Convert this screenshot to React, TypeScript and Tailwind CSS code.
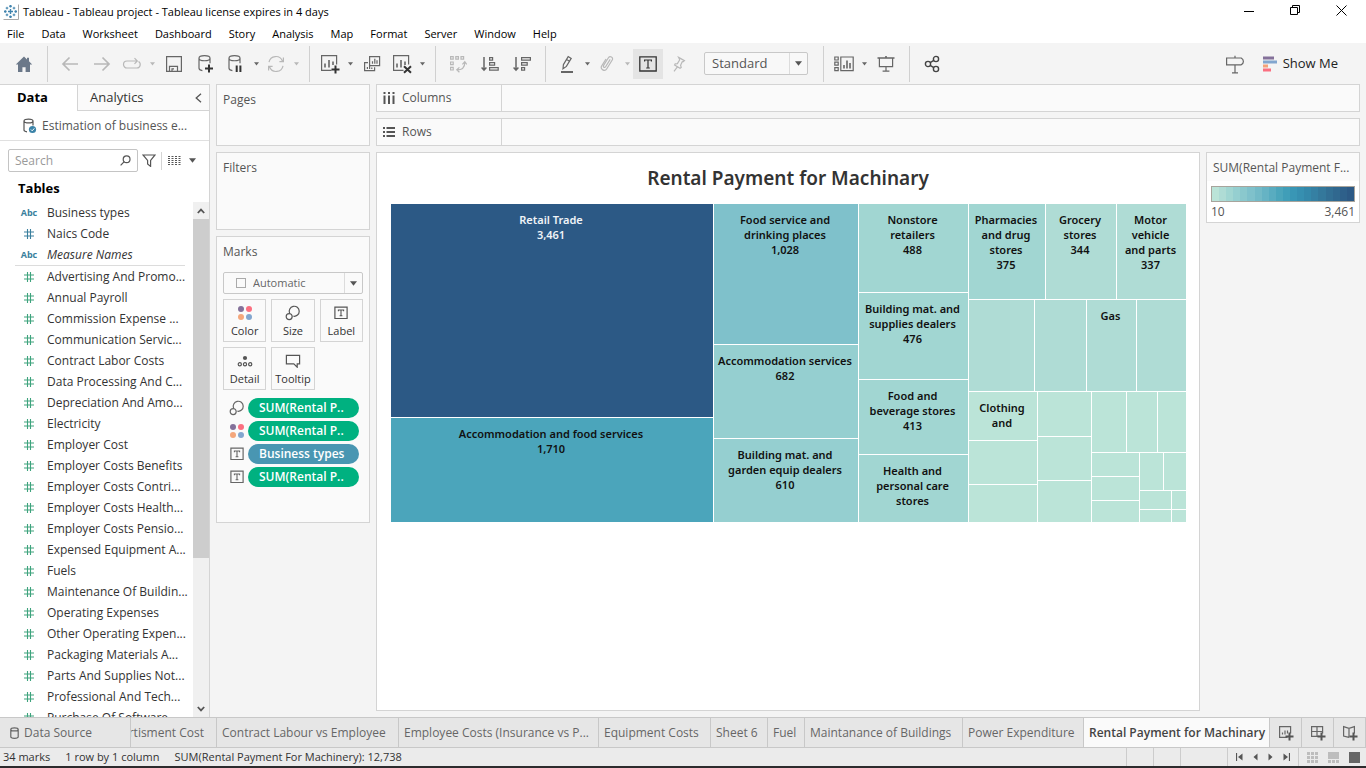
import React from "react";
import type { ReactNode } from "react";

/* ---------- icons ---------- */

type IconProps = { w?: number; h?: number; children: ReactNode; className?: string };

function Icon({ w = 20, h = 20, children, className = "" }: IconProps) {
  return (
    <svg
      width={w}
      height={h}
      viewBox={`0 0 ${w} ${h}`}
      fill="none"
      stroke="currentColor"
      strokeWidth={1.2}
      className={`shrink-0 ${className}`}
      aria-hidden="true"
    >
      {children}
    </svg>
  );
}

const TableauLogo = () => (
  <Icon w={16} h={16}>
    <path d="M0.5 15.5h15v-15" stroke="#a8a8a8" strokeWidth={1} />
    <g stroke="#3f83ad" strokeWidth={1.4}>
      <path d="M7.5 5v5M5 7.5h5M7.5 1v2.6M6.2 2.3h2.6M7.5 11.4V14M6.2 12.7h2.6M1 7.5h2.6M2.3 6.2v2.6M11.4 7.5H14M12.7 6.2v2.6" />
      <path d="M4 2.8v2.6M2.7 4.1h2.6M11 2.8v2.6M9.7 4.1h2.6M4 9.6v2.6M2.7 10.9h2.6M11 9.6v2.6M9.7 10.9h2.6" strokeWidth={1} />
    </g>
  </Icon>
);

const HomeIcon = () => (
  <Icon w={18} h={16}>
    <path d="M9 0.5 0.8 8.4H3V16h4.4v-4.8h3.2V16H15V8.4h2.2L14 5.3V1.8h-2v1.6z" fill="#6b7889" stroke="none" />
  </Icon>
);

const ArrowLeft = () => (
  <Icon w={18} h={16}>
    <path d="M17 8H2M8.5 1.5 2 8l6.5 6.5" strokeWidth={1.7} />
  </Icon>
);

const ArrowRight = () => (
  <Icon w={18} h={16}>
    <path d="M1 8h15M9.5 1.5 16 8l-6.5 6.5" strokeWidth={1.7} />
  </Icon>
);

const ReplayIcon = () => (
  <Icon w={20} h={14}>
    <path d="M12 4H5a3.5 3.5 0 0 0 0 7h10a3.5 3.5 0 0 0 1.5-6.5M10 4h5M12.5 1.2 15.3 4l-2.8 2.8" />
  </Icon>
);

const SaveIcon = () => (
  <Icon w={16} h={16}>
    <path d="M0.6 0.6h14.8v14.8H0.6zM3.5 15.4v-5h8v5M6 15.4v-2.6h2" />
  </Icon>
);

function DatabaseIcon({ badge }: { badge: "plus" | "pause" }) {
  return (
    <Icon w={18} h={20}>
      <path d="M2 4.2c0-3.4 11-3.4 11 0s-11 3.4-11 0zM2 4.2v10c0 1.4 1.2 2 3.4 2.4M13 4.2v5" />
      {badge === "plus" ? (
        <path d="M12 10.5v8M8 14.5h8" stroke="#333" strokeWidth={2} />
      ) : (
        <path d="M9.7 11.5v6.5M13.4 11.5v6.5" stroke="#333" strokeWidth={2} />
      )}
    </Icon>
  );
}

const RefreshIcon = () => (
  <Icon w={18} h={18}>
    <path d="M2 7.2A7 7 0 0 1 15.4 6M16 10.8A7 7 0 0 1 2.6 12M16.4 2.6v4h-4M1.6 15.4v-4h4" />
  </Icon>
);

const NewSheetIcon = ({ badge = "plus" }: { badge?: "plus" | "cross" }) => (
  <Icon w={20} h={20}>
    <path d="M11.5 16.4H1.6V1.6h15v9" />
    <path d="M5 13.5v-4M9 13.5V6M13 11V7.5" strokeWidth={1.6} />
    {badge === "plus" ? (
      <path d="M15.5 11.5v8M11.5 15.5h8" stroke="#333" strokeWidth={2} />
    ) : (
      <path d="m12 12.2 7 6.6M19 12.2l-7 6.6" stroke="#333" strokeWidth={2} />
    )}
  </Icon>
);

const DuplicateIcon = () => (
  <Icon w={18} h={18}>
    <path d="M6.6 1.6h10v9h-10zM5 7.6H1.6v8h10v-3.4" />
    <path d="M9.5 8.8V6.2M11.8 8.8V3.8M14 8.8V5.2M4.4 14v-2M6.6 14v-3.4M8.8 14v-1.6" />
  </Icon>
);

const SwapIcon = () => (
  <Icon w={18} h={18}>
    <path d="M1.6 1.6h2.6v2.6H1.6zM6.8 1.6h2.6v2.6H6.8zM12 1.6h2.6v2.6H12zM1.6 7h2.6v2.6H1.6zM1.6 12.4h2.6V15H1.6z" />
    <path d="M15.8 7.4c0 4.4-2.6 7.4-7.8 7.4M13.4 9.4l2.4-2.6 2 2.6M10.4 12.4 7.8 14.8l2.6 2.4" />
  </Icon>
);

const SortAscIcon = () => (
  <Icon w={18} h={16}>
    <path d="M3 1v13M0.6 11.6 3 14.2l2.4-2.6" strokeWidth={1.5} />
    <path d="M8.6 1.6h3v2.6h-3zM8.6 6.6h5v2.6h-5zM8.6 11.6h8.6v2.6H8.6z" />
  </Icon>
);

const SortDescIcon = () => (
  <Icon w={18} h={16}>
    <path d="M3 1v13M0.6 11.6 3 14.2l2.4-2.6" strokeWidth={1.5} />
    <path d="M8.6 1.6h8.8v2.6H8.6zM8.6 6.6h5.6v2.6H8.6zM8.6 11.6h3v2.6h-3z" />
  </Icon>
);

const PenIcon = () => (
  <Icon w={14} h={18}>
    <path d="m3.4 9.6 4.8-8 3 1.8-4.8 8-3.4 2.4zM6.6 4.4l3 1.8" />
    <path d="M1 17h12" strokeWidth={2} />
  </Icon>
);

const ClipIcon = () => (
  <Icon w={14} h={18}>
    <path d="m10.2 4.4-4.6 7.4c-.8 1.4-3 .2-2-1.4l4.8-7.6c1.6-2.4 5.2-.4 3.8 2.2l-5.4 8.8c-2 3.2-7 .6-5.2-2.8L6 4" />
  </Icon>
);

const LabelIcon = ({ small = false }: { small?: boolean }) =>
  small ? (
    <Icon w={14} h={14}>
      <path d="M0.9 1.1h12.2v11.4H0.9z" />
      <path d="M4.4 5.2V4h5.2v1.2M7 4v5.8M5.6 9.8h2.8" strokeWidth={1.1} />
    </Icon>
  ) : (
    <Icon w={18} h={16}>
      <path d="M0.8 0.8h16.4v14.2H0.8z" strokeWidth={1.3} />
      <path d="M5.6 5.6V4h6.8v1.6M9 4v8M7.2 12h3.6" />
    </Icon>
  );

const PinIcon = () => (
  <Icon w={14} h={16}>
    <path d="m6.6 1.4 5.8 3.2-1.2 1-1 .2-1.6 3.4.6 2.2-1.2.8-5.4-3.2.6-1.2 2.2-.2L7.6 4l-.2-1zM5.6 10.6 2 15.4" />
  </Icon>
);

const FitIcon = () => (
  <Icon w={20} h={16}>
    <path d="M0.8 1h3.4v3H0.8zM0.8 6.2h3.4v3H0.8zM0.8 11.6h3.4v3H0.8zM6.8 1h12.4v13.6H6.8z" />
    <path d="M10 12.4V9M13 12.4V4.4M16 12.4V7" strokeWidth={1.6} />
  </Icon>
);

const PresentIcon = () => (
  <Icon w={18} h={18}>
    <path d="M0.5 3h17M9 1v2" strokeWidth={1.6} />
    <path d="M2.4 3v8.6h13.2V3M9 11.6V16M5.6 16.2h6.8" />
  </Icon>
);

const ShareIcon = () => (
  <Icon w={16} h={18}>
    <g stroke="#444" strokeWidth={1.4}>
      <circle cx="4" cy="9" r="2.6" />
      <circle cx="12" cy="4" r="2.6" />
      <circle cx="12" cy="14" r="2.6" />
      <path d="m6.2 7.6 3.6-2.2M6.2 10.4l3.6 2.2" />
    </g>
  </Icon>
);

const SignpostIcon = () => (
  <Icon w={20} h={20}>
    <path d="M1.6 4h14.6c1.4.8 2.2 2 2.2 3.4 0 1.4-.8 2.6-2.2 3.4H1.6zM10 1.8V4M10 10.8v8M7 18.8h6" />
  </Icon>
);

const ShowMeIcon = () => (
  <Icon w={14} h={16}>
    <g stroke="none">
      <path d="M0 0.5h11v3H0z" fill="#84719a" />
      <path d="M0 4.5h14v3H0z" fill="#82a6cf" />
      <path d="M0 8.5h5v3H0z" fill="#f4a27a" />
      <path d="M0 12.5h8v3H0z" fill="#fb6f80" />
    </g>
  </Icon>
);

const Caret = () => (
  <svg width="5" height="4" viewBox="0 0 5 4" className="shrink-0" aria-hidden="true">
    <path d="M0 0.3h5L2.5 3.5z" fill="currentColor" />
  </svg>
);

const BigCaret = () => (
  <svg width="7" height="5" viewBox="0 0 7 5" className="shrink-0" aria-hidden="true">
    <path d="M0 0.3h7L3.5 4.7z" fill="#555" />
  </svg>
);

const SourceIcon = () => (
  <Icon w={16} h={16}>
    <path d="M2 3c0-2.6 9-2.6 9 0s-9 2.6-9 0zM2 3v9c0 1 1 1.6 3 1.8M11 3v4.5" />
    <circle cx="10.5" cy="11.5" r="3.6" fill="#3b83a8" stroke="none" />
    <path d="m8.9 11.5 1.3 1.3 2.1-2.4" stroke="#fff" strokeWidth={1} />
  </Icon>
);

const ColorDots = () => (
  <Icon w={16} h={16}>
    <g stroke="none">
      <circle cx="4" cy="4" r="3" fill="#84719a" />
      <circle cx="12" cy="4" r="3" fill="#fb6f80" />
      <circle cx="4" cy="12" r="3" fill="#f4a77c" />
      <circle cx="12" cy="12" r="3" fill="#82a6cf" />
    </g>
  </Icon>
);

const SizeIcon = () => (
  <Icon w={16} h={16}>
    <path d="M4.6 8.2a5 5 0 1 1 3.8 3" />
    <circle cx="4.2" cy="11.6" r="3" />
  </Icon>
);

const DetailIcon = () => (
  <Icon w={16} h={14}>
    <circle cx="8" cy="4" r="2.1" fill="#555" stroke="none" />
    <circle cx="2.8" cy="10.2" r="1.6" />
    <circle cx="8" cy="10.2" r="1.6" />
    <circle cx="13.2" cy="10.2" r="1.6" />
  </Icon>
);

const TooltipIcon = () => (
  <Icon w={16} h={14}>
    <path d="M1.4 1.4h13.2v8.4h-2.4v3.4L8.8 9.8H1.4z" />
  </Icon>
);

/* ---------- toolbar ---------- */

function Tool({ label, caret, faded, tone = "text-[#666]", children }: { label: string; caret?: boolean; faded?: boolean; tone?: string; children: ReactNode }) {
  const color = faded ? "text-[#b8b8b8]" : tone;
  if (!caret) {
    return (
      <button type="button" aria-label={label} className={`flex h-8 w-8 items-center justify-center ${color}`}>
        {children}
      </button>
    );
  }
  return (
    <div className={`flex items-center ${color}`}>
      <button type="button" aria-label={label} className="flex h-8 w-7 items-center justify-center">
        {children}
      </button>
      <button type="button" aria-label={`${label} options`} className="flex h-8 w-3 items-center justify-center">
        <Caret />
      </button>
    </div>
  );
}

const ToolGroup = ({ children }: { children: ReactNode }) => (
  <div className="flex h-9 items-center border-r border-[#d0d0d0] pr-[7px] pl-1.5">{children}</div>
);

function Toolbar() {
  return (
    <div className="flex h-[41px] items-center bg-[#f4f4f4] text-[#666]">
      <div className="flex h-9 w-12 items-center justify-center border-r border-[#d0d0d0]">
        <button type="button" aria-label="Start page"><HomeIcon /></button>
      </div>
      <ToolGroup>
        <Tool label="Undo" faded><ArrowLeft /></Tool>
        <Tool label="Redo" faded><ArrowRight /></Tool>
        <Tool label="Replay" faded caret><ReplayIcon /></Tool>
        <Tool label="Save"><SaveIcon /></Tool>
        <Tool label="New data source"><DatabaseIcon badge="plus" /></Tool>
        <Tool label="Pause updates" caret><DatabaseIcon badge="pause" /></Tool>
        <Tool label="Refresh" faded caret><RefreshIcon /></Tool>
      </ToolGroup>
      <ToolGroup>
        <Tool label="New worksheet" caret><NewSheetIcon /></Tool>
        <Tool label="Duplicate"><DuplicateIcon /></Tool>
        <Tool label="Clear sheet" caret><NewSheetIcon badge="cross" /></Tool>
      </ToolGroup>
      <ToolGroup>
        <Tool label="Swap" faded><SwapIcon /></Tool>
        <Tool label="Sort ascending"><SortAscIcon /></Tool>
        <Tool label="Sort descending"><SortDescIcon /></Tool>
      </ToolGroup>
      <div className="flex h-9 items-center border-r border-[#d0d0d0] pr-[15px] pl-[7px]">
        <Tool label="Highlight" caret><PenIcon /></Tool>
        <Tool label="Group" faded caret><ClipIcon /></Tool>
        <button type="button" aria-label="Show mark labels" aria-pressed="true" className="flex h-[30px] w-[30px] items-center justify-center bg-[#e4e4e4] text-[#333]">
          <LabelIcon />
        </button>
        <Tool label="Fix axes" faded><PinIcon /></Tool>
        <div className="relative ml-[9px] flex h-[23px] w-[104px] items-center rounded-[2px] border border-[#c8c8c8] bg-[#f8f8f8]">
          <select aria-label="Fit" className="h-full w-full appearance-none pl-[7px] text-[13px] text-[#555]">
            <option>Standard</option>
          </select>
          <span className="pointer-events-none absolute inset-y-0 right-0 flex w-[18px] items-center justify-center border-l border-[#dcdcdc]"><BigCaret /></span>
        </div>
      </div>
      <ToolGroup>
        <Tool label="Show or hide cards" caret><FitIcon /></Tool>
        <Tool label="Presentation mode"><PresentIcon /></Tool>
      </ToolGroup>
      <div className="flex items-center px-1.5">
        <Tool label="Share"><ShareIcon /></Tool>
      </div>
      <div className="ml-auto flex items-center pr-7">
        <Tool label="Guide"><SignpostIcon /></Tool>
        <button type="button" className="flex items-center gap-1.5 pl-3 text-[13px] text-[#222]">
          <ShowMeIcon />
          Show Me
        </button>
      </div>
    </div>
  );
}

/* ---------- window header ---------- */

const menus = ["File", "Data", "Worksheet", "Dashboard", "Story", "Analysis", "Map", "Format", "Server", "Window", "Help"];

function WindowHeader() {
  return (
    <header className="bg-white text-black">
      <div className="flex h-6 items-center">
        <div className="flex items-center gap-1 pl-[3px] text-[11px]">
          <TableauLogo />
          <h1>Tableau - Tableau project - Tableau license expires in 4 days</h1>
        </div>
        <div className="ml-auto flex pr-0.5 pb-1">
          <button type="button" aria-label="Minimize" className="flex h-5 w-[46px] items-center justify-center">
            <Icon w={11} h={11}><path d="M0 6.5h10" stroke="#000" strokeWidth={1} /></Icon>
          </button>
          <button type="button" aria-label="Restore" className="flex h-5 w-[46px] items-center justify-center">
            <Icon w={11} h={11}><path d="M0.5 2.5h7v7h-7zM2.5 2.5v-2h7v7h-2" stroke="#000" strokeWidth={1} /></Icon>
          </button>
          <button type="button" aria-label="Close" className="flex h-5 w-[46px] items-center justify-center">
            <Icon w={11} h={11}><path d="m0.5 0.5 10 10M10.5 0.5l-10 10" stroke="#000" strokeWidth={1} /></Icon>
          </button>
        </div>
      </div>
      <nav className="flex h-[19px] items-center gap-[17px] px-[7px] pt-px text-[11px]">
        {menus.map((m) => (
          <button type="button" key={m}>{m}</button>
        ))}
      </nav>
    </header>
  );
}

/* ---------- data pane ---------- */

const dimensions = [
  { name: "Business types", type: "Abc", italic: false },
  { name: "Naics Code", type: "#", italic: false },
  { name: "Measure Names", type: "Abc", italic: true },
];

const measures = [
  "Advertising And Promo...", "Annual Payroll", "Commission Expense ...", "Communication Servic...",
  "Contract Labor Costs", "Data Processing And C...", "Depreciation And Amo...", "Electricity",
  "Employer Cost", "Employer Costs Benefits", "Employer Costs Contri...", "Employer Costs Health...",
  "Employer Costs Pensio...", "Expensed Equipment A...", "Fuels", "Maintenance Of Buildin...",
  "Operating Expenses", "Other Operating Expen...", "Packaging Materials A...", "Parts And Supplies Not...",
  "Professional And Tech...", "Purchase Of Software",
];

const HashIcon = () => (
  <Icon w={10} h={10}>
    <path d="M3.5 0v10M6.5 0v10M0 3h10M0 7h10" strokeWidth={1.1} />
  </Icon>
);

function Field({ name, type, italic, color }: { name: string; type: string; italic?: boolean; color: string }) {
  return (
    <li className="flex h-[21px] items-center text-[12px] whitespace-nowrap text-[#333]">
      <span className={`ml-4 flex w-[26px] shrink-0 justify-center text-[9px] font-bold ${color}`}>
        {type === "#" ? <HashIcon /> : type}
      </span>
      <span className={italic ? "ml-[5px] italic" : "ml-[5px]"}>{name}</span>
    </li>
  );
}

function DataPane() {
  return (
    <aside className="flex w-[210px] shrink-0 flex-col border-t border-r border-[#d4d4d4] bg-white">
      <div className="flex h-[26px] shrink-0 text-[13px]">
        <button type="button" className="w-[77px] pr-3 font-bold text-black">Data</button>
        <div className="flex flex-1 items-center border-b border-l border-[#d4d4d4] bg-[#fafafa] text-[#333]">
          <button type="button" className="pl-3">Analytics</button>
          <button type="button" aria-label="Collapse pane" className="mr-[7px] ml-auto text-[#555]">
            <Icon w={7} h={10}><path d="M6 0.8 1.2 5 6 9.2" strokeWidth={1.3} /></Icon>
          </button>
        </div>
      </div>
      <button type="button" className="flex h-[30px] shrink-0 items-center gap-1 border-b border-[#e0e0e0] pl-[22px] text-[12px] text-[#555]">
        <SourceIcon />
        Estimation of business e...
      </button>
      <div className="flex items-center pt-2 pl-2">
        <label className="flex h-[23px] w-[130px] items-center rounded-[2px] border border-[#c4c4c4] pr-1.5 pl-1.5 text-[#555]">
          <input type="text" aria-label="Search" placeholder="Search" className="min-w-0 flex-1 text-[12px] outline-none placeholder:text-[#9a9a9a]" />
          <Icon w={11} h={11}><circle cx="6.6" cy="4.2" r="3.4" /><path d="M4 6.8 0.6 10.4" /></Icon>
        </label>
        <button type="button" aria-label="Filter fields" className="ml-1 flex w-[14px] justify-center text-[#555]">
          <Icon w={14} h={13}><path d="M1 1h12L8.6 6.4v6L5.6 10V6.4z" /></Icon>
        </button>
        <span className="ml-[5px] h-[18px] border-l border-[#d4d4d4]" />
        <button type="button" aria-label="View as" className="ml-1.5 flex items-center gap-2">
          <Icon w={13} h={10}><path d="M0 0.5h13M0 2.5h13M0 4.5h13M0 6.5h13M0 8.5h13" stroke="#555" strokeWidth={1} strokeDasharray="2 1.5" /></Icon>
          <BigCaret />
        </button>
      </div>
      <h2 className="flex h-[30px] shrink-0 items-center pt-[3px] pl-[18px] text-[13px] font-bold text-black">Tables</h2>
      <div className="flex min-h-0 flex-1">
        <div className="min-h-0 min-w-0 flex-1 overflow-hidden">
          <ul>
            {dimensions.map((d) => (
              <Field key={d.name} name={d.name} type={d.type} italic={d.italic} color="text-[#3a7f9d]" />
            ))}
          </ul>
          <div className="mr-2 ml-[15px] border-t border-[#dcdcdc]" />
          <ul>
            {measures.map((m) => (
              <Field key={m} name={m} type="#" color="text-[#3ea37d]" />
            ))}
          </ul>
        </div>
        <div className="flex w-4 shrink-0 flex-col bg-[#f0f0f0]">
          <button type="button" aria-label="Scroll up" className="flex h-[17px] items-center justify-center">
            <Icon w={8} h={6}><path d="M0.8 5 4 1.6 7.2 5" stroke="#555" strokeWidth={1.8} /></Icon>
          </button>
          <div className="flex-1">
            <div className="h-[70.5%] bg-[#cdcdcd]" />
          </div>
          <button type="button" aria-label="Scroll down" className="flex h-[17px] items-center justify-center">
            <Icon w={8} h={6}><path d="M0.8 1 4 4.4 7.2 1" stroke="#555" strokeWidth={1.8} /></Icon>
          </button>
        </div>
      </div>
    </aside>
  );
}

/* ---------- shelves and cards ---------- */

const card = "border border-[#d4d4d4] bg-[#fafafa]";

const markButtons = [
  { label: "Color", icon: <ColorDots /> },
  { label: "Size", icon: <SizeIcon /> },
  { label: "Label", icon: <LabelIcon small /> },
  { label: "Detail", icon: <DetailIcon /> },
  { label: "Tooltip", icon: <TooltipIcon /> },
];

const pills = [
  { text: "SUM(Rental P..", icon: <SizeIcon />, color: "bg-[#00b180]" },
  { text: "SUM(Rental P..", icon: <ColorDots />, color: "bg-[#00b180]" },
  { text: "Business types", icon: <LabelIcon small />, color: "bg-[#4996b2]" },
  { text: "SUM(Rental P..", icon: <LabelIcon small />, color: "bg-[#00b180]" },
];

function Cards() {
  return (
    <div className="flex w-[154px] shrink-0 flex-col gap-1.5 text-[12px] text-[#555]">
      <section className={`${card} h-[62px] px-1.5 pt-1.5`}><h2>Pages</h2></section>
      <section className={`${card} h-[78px] px-1.5 pt-1.5`}><h2>Filters</h2></section>
      <section className={`${card} px-1.5 pt-1.5 pb-[35px]`}>
        <h2>Marks</h2>
        <div className="relative mt-[11px] flex h-[22px] items-center rounded-[2px] border border-[#c8c8c8] bg-[#fafafa]">
          <span className="ml-3 h-[10px] w-[10px] shrink-0 border border-[#aaa]" />
          <select aria-label="Mark type" className="h-full w-full appearance-none pl-[7px] text-[11px] text-[#666]">
            <option>Automatic</option>
          </select>
          <span className="pointer-events-none absolute inset-y-0 right-0 flex w-[18px] items-center justify-center border-l border-[#dcdcdc]"><BigCaret /></span>
        </div>
        <div className="mt-[5px] grid grid-cols-3 gap-[5px]">
          {markButtons.map((b) => (
            <button type="button" key={b.label} className="flex h-[43px] flex-col items-center border border-[#d4d4d4] pt-[5px] text-[11px] text-[#333]">
              <span className="flex h-[17px] items-center text-[#555]">{b.icon}</span>
              <span className="leading-5">{b.label}</span>
            </button>
          ))}
        </div>
        <ul className="mt-2 flex flex-col gap-[3px]">
          {pills.map((p, i) => (
            <li key={i} className="flex items-center gap-[3px] pr-1 pl-1.5 text-[#666]">
              <span className="flex w-4 justify-center">{p.icon}</span>
              <button type="button" className={`h-5 flex-1 rounded-full pl-[11px] text-left text-[12px] font-semibold text-white ${p.color}`}>
                {p.text}
              </button>
            </li>
          ))}
        </ul>
      </section>
    </div>
  );
}

function Shelf({ label, icon }: { label: string; icon: ReactNode }) {
  return (
    <div className={`${card} flex h-7 items-stretch text-[12px] text-[#555]`}>
      <div className="flex w-[125px] items-center gap-[7px] border-r border-[#d4d4d4] pl-1.5">
        {icon}
        {label}
      </div>
    </div>
  );
}

/* ---------- treemap ---------- */

const shade = {
  navy: "bg-[#2c5985]",
  teal: "bg-[#4ba5bb]",
  sky: "bg-[#7fc1cb]",
  aqua: "bg-[#95cfd0]",
  mist: "bg-[#a1d6d2]",
  mint: "bg-[#afdcd5]",
  pale: "bg-[#bbe4d8]",
};

function Tile({ tone, lines = [], light }: { tone: keyof typeof shade; lines?: string[]; light?: boolean }) {
  return (
    <div className={`min-h-0 min-w-0 overflow-hidden text-center text-[11px] leading-[15px] font-semibold ${shade[tone]} ${light ? "text-[#f0f4f8]" : "text-[#111]"}`}>
      {lines.length > 0 && (
        <p className="pt-2 pr-0.5">
          {lines.map((l) => (
            <span key={l} className="block whitespace-nowrap">{l}</span>
          ))}
        </p>
      )}
    </div>
  );
}

function Treemap() {
  return (
    <div className="mr-[13px] ml-[14px] grid h-[318px] grid-cols-[322fr_144fr_109fr_217fr] gap-px bg-white font-['Noto_Sans',sans-serif]">
      <div className="grid min-w-0 grid-rows-[213fr_104fr] gap-px">
        <Tile tone="navy" light lines={["Retail Trade", "3,461"]} />
        <Tile tone="teal" lines={["Accommodation and food services", "1,710"]} />
      </div>
      <div className="grid min-w-0 grid-rows-[140fr_93fr_83fr] gap-px">
        <Tile tone="sky" lines={["Food service and", "drinking places", "1,028"]} />
        <Tile tone="aqua" lines={["Accommodation services", "682"]} />
        <Tile tone="aqua" lines={["Building mat. and", "garden equip dealers", "610"]} />
      </div>
      <div className="grid min-w-0 grid-rows-[88fr_86fr_74fr_67fr] gap-px">
        <Tile tone="mist" lines={["Nonstore", "retailers", "488"]} />
        <Tile tone="mist" lines={["Building mat. and", "supplies dealers", "476"]} />
        <Tile tone="mist" lines={["Food and", "beverage stores", "413"]} />
        <Tile tone="mist" lines={["Health and", "personal care", "stores"]} />
      </div>
      <div className="grid min-w-0 grid-rows-[95fr_91fr_130fr] gap-px">
        <div className="grid min-h-0 grid-cols-[76fr_70fr_69fr] gap-px">
          <Tile tone="mist" lines={["Pharmacies", "and drug", "stores", "375"]} />
          <Tile tone="mint" lines={["Grocery", "stores", "344"]} />
          <Tile tone="mint" lines={["Motor", "vehicle", "and parts", "337"]} />
        </div>
        <div className="grid min-h-0 grid-cols-[65fr_51fr_49fr_49fr] gap-px">
          <Tile tone="mint" />
          <Tile tone="mint" />
          <Tile tone="mint" lines={["Gas"]} />
          <Tile tone="mint" />
        </div>
        <div className="grid min-h-0 grid-cols-[68fr_53fr_94fr] gap-px">
          <div className="grid min-h-0 grid-rows-[48fr_43fr_37fr] gap-px">
            <Tile tone="pale" lines={["Clothing", "and"]} />
            <Tile tone="pale" />
            <Tile tone="pale" />
          </div>
          <div className="grid min-h-0 grid-rows-[44fr_43fr_41fr] gap-px">
            <Tile tone="pale" />
            <Tile tone="pale" />
            <Tile tone="pale" />
          </div>
          <div className="grid min-h-0 grid-rows-[60fr_69fr] gap-px">
            <div className="grid grid-cols-[34fr_30fr_28fr] gap-px">
              <Tile tone="pale" />
              <Tile tone="pale" />
              <Tile tone="pale" />
            </div>
            <div className="grid grid-cols-[47fr_46fr] gap-px">
              <div className="grid grid-rows-[23fr_23fr_21fr] gap-px">
                <Tile tone="pale" />
                <Tile tone="pale" />
                <Tile tone="pale" />
              </div>
              <div className="grid grid-rows-[37fr_31fr] gap-px">
                <div className="grid grid-cols-[23fr_22fr] gap-px">
                  <Tile tone="pale" />
                  <Tile tone="pale" />
                </div>
                <div className="grid grid-cols-[31fr_14fr] grid-rows-[18fr_12fr] gap-px">
                  <Tile tone="pale" />
                  <Tile tone="pale" />
                  <Tile tone="pale" />
                  <Tile tone="pale" />
                </div>
              </div>
            </div>
          </div>
        </div>
      </div>
    </div>
  );
}

const ramp = [
  "#bbe4d8", "#afdcd5", "#a1d6d2", "#95cfd0", "#8ac8cd", "#7fc1cb", "#73bac7", "#66b3c4", "#59acc0", "#4ba5bb",
  "#409eb8", "#3996b5", "#368fb0", "#3488aa", "#3580a3", "#34789b", "#326f94", "#30688f", "#2e608a", "#2c5985",
];

function Legend() {
  return (
    <aside className="h-[71px] w-[154px] shrink-0 border border-[#d4d4d4] bg-white text-[12px] text-[#555]">
      <h2 className="h-7 bg-[#fafafa] pt-1.5 pl-1.5 whitespace-nowrap">SUM(Rental Payment F...</h2>
      <div className="mx-1 mt-[5px] flex h-4 border border-[#a8a49c]">
        {ramp.map((c) => (
          <span key={c} className="flex-1" style={{ backgroundColor: c }} />
        ))}
      </div>
      <div className="mx-1 flex justify-between leading-5">
        <span>10</span>
        <span>3,461</span>
      </div>
    </aside>
  );
}

/* ---------- sheet tabs and status bar ---------- */

const sheets = [
  { name: "Contract Labour vs Employee", width: "w-[182px]" },
  { name: "Employee Costs (Insurance vs P...", width: "w-[200px]" },
  { name: "Equipment Costs", width: "w-[112px]" },
  { name: "Sheet 6", width: "w-[57px]" },
  { name: "Fuel", width: "w-[37px]" },
  { name: "Maintanance of Buildings", width: "w-[158px]" },
  { name: "Power Expenditure", width: "w-[121px]" },
];

const newTabs = [
  { label: "New worksheet", art: <><path d="M9.5 12.4H1.6V1.6h11v7" /><path d="M4.5 9.5v-2M7 9.5v-4M9.5 8.5v-3" /></> },
  { label: "New dashboard", art: <path d="M9.5 11.4H1.6V1.6h11v7M1.6 6.5h11M7 1.6v9.8" /> },
  { label: "New story", art: <path d="M7 12.4 1.6 11V1.6L7 3.4l5.4-1.8v7M7 3.4v9" /> },
];

function SheetTabs() {
  return (
    <div className="flex h-[31px] shrink-0 border-t border-b border-[#c8c8c8] bg-[#e6e6e6] text-[12px] whitespace-nowrap text-[#666]">
      <button type="button" className="flex w-[131px] shrink-0 items-center gap-[5px] border-r border-[#c8c8c8] pl-2.5">
        <Icon w={9} h={12}><path d="M0.8 2.4c0-2 7.4-2 7.4 0s-7.4 2-7.4 0zM0.8 2.4v7.4c0 2 7.4 2 7.4 0V2.4" /></Icon>
        Data Source
      </button>
      <button type="button" className="flex w-[86px] shrink-0 items-center justify-end overflow-hidden border-r border-[#c8c8c8] pr-3">
        <span>Advertisment Cost</span>
      </button>
      {sheets.map((s) => (
        <button type="button" key={s.name} className={`border-r border-[#c8c8c8] pl-[5px] text-left ${s.width}`}>
          {s.name}
        </button>
      ))}
      <button type="button" aria-current="page" className="w-[186px] border-r border-[#c8c8c8] bg-[#fafafa] pl-[5px] text-left font-semibold text-[#444]">
        Rental Payment for Machinary
      </button>
      {newTabs.map((t) => (
        <button type="button" key={t.label} aria-label={t.label} className="flex w-8 items-center justify-center border-r border-[#c8c8c8]">
          <Icon w={16} h={16}>
            {t.art}
            <path d="M11.5 7.5v8M7.5 11.5h8" stroke="#555" strokeWidth={2} />
          </Icon>
        </button>
      ))}
    </div>
  );
}

function StatusBar() {
  return (
    <footer className="flex h-5 shrink-0 items-stretch border-b-2 border-[#2d2b2d] bg-[#ebebeb] text-[11px] text-[#333]">
      <div className="flex items-center gap-[15px] pt-px pl-[3px]">
        <span>34 marks</span>
        <span>1 row by 1 column</span>
        <span>SUM(Rental Payment For Machinery): 12,738</span>
      </div>
      <div className="ml-auto flex">
        <span className="w-[27px] border-l border-[#ccc]" />
        <span className="w-[27px] border-l border-[#ccc]" />
        <span className="w-[47px] border-l border-[#ccc]" />
        <div className="flex w-[71px] items-center justify-between border-l border-[#ccc] px-2 text-[#555]">
          <button type="button" aria-label="First sheet"><Icon w={7} h={8}><path d="M0.5 0v8" /><path d="M6.5 0.5v7L2 4z" fill="#555" stroke="none" /></Icon></button>
          <button type="button" aria-label="Previous sheet"><Icon w={5} h={8}><path d="M4.5 0.5v7L0.5 4z" fill="#555" stroke="none" /></Icon></button>
          <button type="button" aria-label="Next sheet"><Icon w={5} h={8}><path d="M0.5 0.5v7l4-3.5z" fill="#555" stroke="none" /></Icon></button>
          <button type="button" aria-label="Last sheet"><Icon w={7} h={8}><path d="M6.5 0v8" /><path d="M0.5 0.5v7L5 4z" fill="#555" stroke="none" /></Icon></button>
        </div>
        <div className="flex items-center gap-[10px] border-l border-[#ccc] pr-1.5 pl-2">
          <button type="button" aria-label="Show sheet sorter">
            <Icon w={11} h={11}><path d="M0 1.5h11M0 5.5h11M0 9.5h11" stroke="#bdbdbd" strokeWidth={3} strokeDasharray="3 1" /></Icon>
          </button>
          <button type="button" aria-label="Show filmstrip">
            <Icon w={11} h={11}><path d="M0 0h11v7H0z" fill="#bdbdbd" stroke="none" /><path d="M0 9.5h11" stroke="#bdbdbd" strokeWidth={3} strokeDasharray="3 1" /></Icon>
          </button>
          <button type="button" aria-label="Show tabs">
            <Icon w={11} h={11}><path d="M0 0h11v11H0z" fill="#666" stroke="none" /></Icon>
          </button>
        </div>
      </div>
    </footer>
  );
}

export default function App() {
  return (
    <div className="flex h-screen flex-col overflow-hidden bg-[#f4f4f4] font-['Open_Sans',sans-serif]">
      <WindowHeader />
      <Toolbar />
      <div className="flex min-h-0 flex-1">
        <DataPane />
        <main className="flex min-w-0 flex-1 gap-1.5 pr-1.5 pb-1.5 pl-1.5">
          <Cards />
          <div className="flex min-w-0 flex-1 flex-col gap-1.5">
            <Shelf label="Columns" icon={<Icon w={12} h={12}><path d="M1.5 0v2M6 0v2M10.5 0v2M1.5 3.5V12M6 3.5V12M10.5 3.5V12" strokeWidth={2} /></Icon>} />
            <Shelf label="Rows" icon={<Icon w={12} h={12}><path d="M0 2h2M0 6h2M0 10h2M3.5 2H12M3.5 6H12M3.5 10H12" strokeWidth={2} /></Icon>} />
            <div className="flex min-h-0 flex-1 gap-1.5">
              <section className="min-w-0 flex-1 border border-[#d4d4d4] bg-white">
                <h2 className="pt-[11px] pb-[12px] text-center font-['Noto_Sans',sans-serif] text-[19px] leading-7 font-semibold text-[#333]">
                  Rental Payment for Machinary
                </h2>
                <Treemap />
              </section>
              <Legend />
            </div>
          </div>
        </main>
      </div>
      <SheetTabs />
      <StatusBar />
    </div>
  );
}
